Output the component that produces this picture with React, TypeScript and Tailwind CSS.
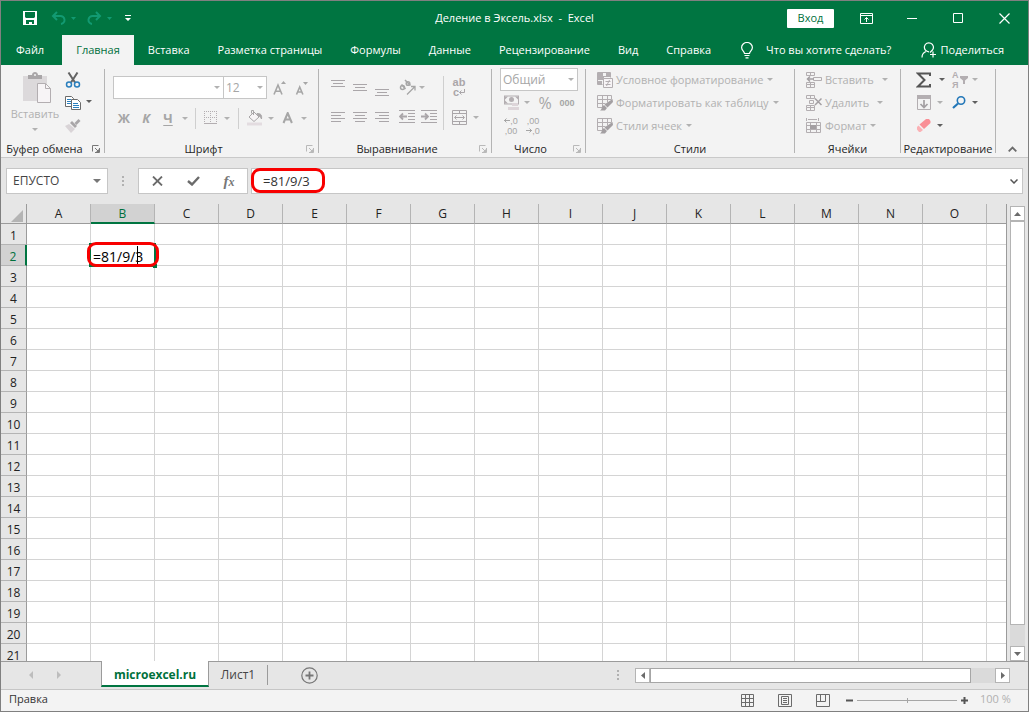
import { useState, type ReactNode } from "react";

const COLS = ["A", "B", "C", "D", "E", "F", "G", "H", "I", "J", "K", "L", "M", "N", "O", ""];
const ROWS = Array.from({ length: 21 }, (_, i) => i + 1);
const TABS = ["Файл", "Главная", "Вставка", "Разметка страницы", "Формулы", "Данные", "Рецензирование", "Вид", "Справка"];

const iconBtn = "flex flex-none items-center justify-center";
const DIM = "#b3aeb1";

// ── Small shared pieces ──────────────────────────────────────────────────────
function Caret({ dark = false }: { dark?: boolean }) {
  return (
    <svg width="6" height="3" viewBox="0 0 6 3" className="flex-none">
      <path d="M0 0h6L3 3z" fill={dark ? "#5f5f5f" : "#b1b1b1"} />
    </svg>
  );
}

function CaretBtn({ label, className, dark }: { label: string; className: string; dark?: boolean }) {
  return (
    <button aria-label={label} className={iconBtn + " h-5 " + className}>
      <Caret dark={dark} />
    </button>
  );
}

function IconBtn({ label, className, children }: { label: string; className: string; children: ReactNode }) {
  return (
    <button aria-label={label} title={label} className={iconBtn + " " + className}>
      {children}
    </button>
  );
}

function Combo({ label, value, className }: { label: string; value: string; className: string }) {
  return (
    <div className={"relative flex-none " + className}>
      <select
        aria-label={label}
        defaultValue={value}
        className="block h-[23px] w-full appearance-none border border-[#c6c6c6] bg-white pl-[2px] text-[12px] leading-5 text-[#a6a6a6] outline-none"
      >
        <option value={value}>{value}</option>
      </select>
      <span className="pointer-events-none absolute right-1 top-[10px]"><Caret /></span>
    </div>
  );
}

function Group({ title, className, launcher, launcherDark, children }: {
  title: string; className: string; launcher?: boolean; launcherDark?: boolean; children: ReactNode;
}) {
  return (
    <section className={"flex flex-none " + className}>
      <div className="flex min-w-0 flex-1 flex-col">
        <div className="min-h-0 flex-1">{children}</div>
        <div className="flex h-4 items-center">
          <h2 className="flex-1 whitespace-nowrap text-center text-[11px] leading-4 text-[#262626]">{title}</h2>
          {launcher && (
            <IconBtn label={"Параметры: " + title} className="h-4 w-4">
              <svg width="8" height="8" viewBox="0 0 8 8" fill="none" stroke={launcherDark ? "#777" : "#b9b9b9"}>
                <path d="M.5 6.500v-6h6M3 3l3 3M7.500 3v4.500H3" />
                <path d="M7 4v3H4z" fill={launcherDark ? "#777" : "#b9b9b9"} stroke="none" />
              </svg>
            </IconBtn>
          )}
        </div>
      </div>
      <div className="my-1 w-px bg-[#b4b4b4]" />
    </section>
  );
}

function Lines({ d }: { d: string }) {
  return (
    <svg width="16" height="16" viewBox="0 0 16 16" fill="none" stroke="#aaa6a9"><path d={d} /></svg>
  );
}

// ── Title bar and ribbon tabs ────────────────────────────────────────────────
function TitleBar() {
  return (
    <header className="relative flex h-[34px] flex-none items-center text-white">
      <IconBtn label="Сохранить" className="ml-[17px] h-6 w-6">
        <svg width="14" height="14" viewBox="0 0 14 14">
          <path d="M0 0h14v14H0z" fill="#fff" />
          <path d="M2 1h10v5l-1 1H3L2 6zM3 9h8v4H9v-2H6v2H3z" fill="#007541" />
        </svg>
      </IconBtn>
      <IconBtn label="Отменить" className="ml-1 h-6 w-6">
        <svg width="15" height="14" viewBox="0 0 15 14" fill="none" stroke="#129a72" strokeWidth="2">
          <path d="M1.500 5H9a4 4 0 0 1 1 8M6 1L2 5l4 4" />
        </svg>
      </IconBtn>
      <svg width="5" height="3" className="ml-[1px]"><path d="M0 0h5L2.500 3z" fill="#129a72" /></svg>
      <IconBtn label="Вернуть" className="ml-[6px] h-6 w-6">
        <svg width="15" height="14" viewBox="0 0 15 14" fill="none" stroke="#129a72" strokeWidth="2">
          <path d="M13.500 5H6a4 4 0 0 0-1 8M9 1l4 4-4 4" />
        </svg>
      </IconBtn>
      <svg width="5" height="3" className="ml-[1px]"><path d="M0 0h5L2.500 3z" fill="#129a72" /></svg>
      <IconBtn label="Настройка панели быстрого доступа" className="ml-1 h-6 w-6">
        <svg width="6" height="6" viewBox="0 0 6 6"><path d="M0 0h6v1H0zM0 3h6L3 6z" fill="#fff" /></svg>
      </IconBtn>
      <h1 className="absolute left-1/2 -translate-x-1/2 whitespace-pre text-[11px] leading-4">Деление в Эксель.xlsx  -  Excel</h1>
      <button className="ml-auto h-[19px] w-[47px] rounded-[1px] bg-white text-[11px] leading-4 text-[#00703c]">Вход</button>
      <div className="ml-[9px] flex">
        <IconBtn label="Параметры отображения ленты" className="h-7 w-[46px]">
          <svg width="13" height="11" viewBox="0 0 13 11" fill="none" stroke="#fff">
            <path d="M.5.5h12v10H.5zM.5 2.500h12M6.500 9V4.500M4.500 6.500l2-2 2 2" />
          </svg>
        </IconBtn>
        <IconBtn label="Свернуть" className="h-7 w-[46px]">
          <svg width="10" height="11" stroke="#fff"><path d="M0 5.500h10" /></svg>
        </IconBtn>
        <IconBtn label="Развернуть" className="h-7 w-[46px]">
          <svg width="10" height="10" fill="none" stroke="#fff"><path d="M.5.5h9v9h-9z" /></svg>
        </IconBtn>
        <IconBtn label="Закрыть" className="h-7 w-[47px]">
          <svg width="11" height="11" stroke="#fff"><path d="M.5.5l10 10M10.500.5l-10 10" strokeWidth="1.200" /></svg>
        </IconBtn>
      </div>
    </header>
  );
}

function RibbonTabs() {
  const [active, setActive] = useState("Главная");
  return (
    <nav className="flex h-[30px] flex-none items-stretch whitespace-nowrap pl-[1px] text-[11px] leading-4 text-white">
      {TABS.map((t) => (
        <button
          key={t}
          onClick={() => setActive(t)}
          className={"px-[14px] " + (t === "Файл" ? "mr-1 " : "") + (active === t ? "bg-[#f3f3f3] text-[#00703c]" : "")}
        >
          {t}
        </button>
      ))}
      <button className="ml-4 flex items-center gap-[13px]">
        <svg width="12" height="17" viewBox="0 0 12 17" fill="none" stroke="#fff" strokeWidth="1.200">
          <path d="M3.500 11.500c0-2-2.900-3-2.900-6a5.400 5 0 0 1 10.800 0c0 3-2.900 4-2.900 6zM3.500 13.500h5M4.500 15.800h3" />
        </svg>
        Что вы хотите сделать?
      </button>
      <button className="ml-auto mr-6 flex items-center gap-1">
        <svg width="16" height="16" viewBox="0 0 16 16" fill="none" stroke="#fff" strokeWidth="1.200">
          <path d="M1 15.500c0-3 1.500-5 4-6M8 9.800A4.500 4.500 0 1 1 11.500 8L9 10.500M12 9.500v6M9 12.500h6" />
        </svg>
        Поделиться
      </button>
    </nav>
  );
}

// ── Ribbon groups ────────────────────────────────────────────────────────────
function ClipboardGroup() {
  return (
    <Group title="Буфер обмена" className="w-[104px]" launcher launcherDark>
      <div className="flex pt-[3px]">
        <button className="ml-2 flex w-[52px] flex-col items-center pt-1 text-[11px] leading-4 text-[#b1b1b1]">
          <svg width="28" height="31" viewBox="0 0 28 31" className="ml-1">
            <path d="M0 4h24v25H0z" fill="#dcd9db" />
            <path d="M5 7V3h4c0-4 6-4 6 0h4v4z" fill="#a9a6a8" />
            <circle cx="12" cy="3" r="1" fill="#f3f3f3" />
            <path d="M14.500 11.500h8l5 5v14h-13z" fill="#f7f4f6" stroke="#b3aeb1" />
            <path d="M22.500 11.500v5h5" fill="none" stroke="#b3aeb1" />
          </svg>
          <span className="mt-[3px]">Вставить</span>
          <span className="mt-[6px]"><Caret /></span>
        </button>
        <div className="ml-[2px] flex flex-col">
          <IconBtn label="Вырезать" className="h-[23px] w-5">
            <svg width="16" height="16" viewBox="0 0 16 16" fill="none">
              <path d="M3.500.5l6.500 10M12.500.5L6 10.500" stroke="#636363" strokeWidth="2" />
              <circle cx="4" cy="12.500" r="2.500" stroke="#2a7fbd" strokeWidth="1.500" />
              <circle cx="12" cy="12.500" r="2.500" stroke="#2a7fbd" strokeWidth="1.500" />
            </svg>
          </IconBtn>
          <div className="flex">
            <IconBtn label="Копировать" className="h-[23px] w-5">
              <svg width="16" height="14" viewBox="0 0 16 14" fill="none">
                <path d="M.5.5h6l2 2v8h-8z" fill="#fff" stroke="#6b6b6b" />
                <path d="M2 3.500h4M2 5.500h4M2 7.500h4" stroke="#2a7fbd" />
                <path d="M6.500 3.500h6l3 3v7h-9z" fill="#fff" stroke="#6b6b6b" />
                <path d="M8 7.500h5M8 9.500h6M8 11.500h6" stroke="#2a7fbd" />
              </svg>
            </IconBtn>
            <CaretBtn label="Варианты копирования" className="w-3" dark />
          </div>
          <IconBtn label="Формат по образцу" className="h-[23px] w-5">
            <svg width="16" height="15" viewBox="0 0 16 15">
              <path d="M0 8l4-2 6 5-4 4z" fill="#d9d4d7" />
              <path d="M5 5l2-2 5 5-2 2z" fill="#a9a6a8" />
              <path d="M9.500 5l4-4 2 2-4 4z" fill="#a9a6a8" />
            </svg>
          </IconBtn>
        </div>
      </div>
    </Group>
  );
}

function VSep({ className }: { className: string }) {
  return <div className={"w-px flex-none bg-[#cfcfcf] " + className} />;
}

function FontGroup() {
  const letter = " h-[22px] w-[22px] text-[13px] font-bold leading-4 text-[#a6a6a6]";
  return (
    <Group title="Шрифт" className="w-[214px]" launcher>
      <div className="flex pl-2 pt-[11px]">
        <Combo label="Шрифт" value="" className="w-[111px]" />
        <Combo label="Размер шрифта" value="12" className="-ml-px w-[44px]" />
        <IconBtn label="Увеличить размер шрифта" className="ml-1 h-[23px] w-[18px]">
          <svg width="14" height="14" viewBox="0 0 14 14" fill="none" stroke="#a6a6a6" strokeWidth="1.600">
            <path d="M1 13.500L5 4l4 9.500M2.500 10.200h5" />
            <path d="M8 3h5l-2.500-3z" fill="#a6a6a6" stroke="none" />
          </svg>
        </IconBtn>
        <IconBtn label="Уменьшить размер шрифта" className="ml-1 h-[23px] w-[18px]">
          <svg width="14" height="14" viewBox="0 0 14 14" fill="none" stroke="#a6a6a6" strokeWidth="1.600">
            <path d="M1.500 13.500L4.700 6l3.200 7.500M2.800 11h4" />
            <path d="M8 1h5l-2.500 3z" fill="#a6a6a6" stroke="none" />
          </svg>
        </IconBtn>
      </div>
      <div className="flex items-center pl-2 pt-2">
        <button className={iconBtn + letter}>Ж</button>
        <button className={iconBtn + letter + " italic"}>К</button>
        <button className={iconBtn + letter + " underline underline-offset-2"}>Ч</button>
        <CaretBtn label="Варианты подчеркивания" className="w-3" />
        <VSep className="ml-1 h-[21px]" />
        <IconBtn label="Границы" className="ml-[6px] h-[22px] w-[18px]">
          <svg width="14" height="14" viewBox="0 0 14 14" fill="none" stroke={DIM}>
            <path d="M0 .5h13M0 6.500h13M.5 0v13M6.500 0v13M12.500 0v13" strokeDasharray="1 1" />
            <path d="M0 12.500h13" />
          </svg>
        </IconBtn>
        <CaretBtn label="Варианты границ" className="w-[14px]" />
        <VSep className="ml-1 h-[21px]" />
        <IconBtn label="Цвет заливки" className="ml-[6px] h-[22px] w-[20px]">
          <svg width="16" height="16" viewBox="0 0 16 16" fill="none" stroke="#a9a6a8">
            <path d="M2 7l5-5 5 5-5 4.500z" fill="#f7f4f6" />
            <path d="M6.500 5V.5h-2v3" />
            <path d="M10 3.500c4 0 5 1.500 4.500 5.500-1-2-1.500-3-2.500-2.500z" fill="#a9a6a8" />
            <path d="M0 12.500h15v3H0z" fill="#e3dce0" stroke="none" />
          </svg>
        </IconBtn>
        <CaretBtn label="Варианты заливки" className="w-[12px]" />
        <IconBtn label="Цвет текста" className="h-[22px] w-[22px]">
          <svg width="12" height="12" viewBox="0 0 12 12" fill="none" stroke="#a6a6a6" strokeWidth="2">
            <path d="M1.500 11L5.700 1l4.200 10M3 7.500h5.500" />
          </svg>
        </IconBtn>
        <CaretBtn label="Варианты цвета текста" className="w-[10px]" />
      </div>
    </Group>
  );
}

function AlignGroup() {
  const b = "h-[30px] w-[22px]";
  return (
    <Group title="Выравнивание" className="w-[173px]" launcher>
      <div className="flex pl-2">
        <div className="w-[116px] pt-[7px]">
          <div className="flex">
            <IconBtn label="По верхнему краю" className={b}><Lines d="M1 1.500h14M3 4.500h10M1 7.500h14" /></IconBtn>
            <IconBtn label="По середине" className={b}><Lines d="M1 5.500h14M3 8.500h10M1 11.500h14" /></IconBtn>
            <IconBtn label="По нижнему краю" className={b}>
              <svg width="16" height="22" viewBox="0 0 16 22" fill="none" stroke="#aaa6a9"><path d="M1 13.500h14M3 16.500h10M1 19.500h14" /></svg>
            </IconBtn>
            <IconBtn label="Ориентация" className={b + " ml-[3px]"}>
              <svg width="17" height="17" viewBox="0 0 17 17" fill="none" stroke="#a6a6a6">
                <circle cx="3.500" cy="8.500" r="2" strokeWidth="1.500" />
                <path d="M2.500 5.500l4 4.500M6 1l5.500 5.500" strokeWidth="1.500" />
                <circle cx="9" cy="4.500" r="1.800" strokeWidth="1.500" />
                <path d="M8 15.500l7.500-7.500M12 7.500h4v4" strokeWidth="1.300" />
              </svg>
            </IconBtn>
            <CaretBtn label="Варианты ориентации" className="mt-[5px] w-2" />
          </div>
          <div className="flex">
            <IconBtn label="По левому краю" className={b}><Lines d="M1 3.500h14M1 6.500h10M1 9.500h14M1 12.500h10" /></IconBtn>
            <IconBtn label="По центру" className={b}><Lines d="M1 3.500h14M3 6.500h10M1 9.500h14M3 12.500h10" /></IconBtn>
            <IconBtn label="По правому краю" className={b}><Lines d="M1 3.500h14M5 6.500h10M1 9.500h14M5 12.500h10" /></IconBtn>
            <IconBtn label="Уменьшить отступ" className={b + " ml-[3px]"}>
              <svg width="16" height="14" viewBox="0 0 16 14" fill="none" stroke="#aaa6a9">
                <path d="M0 .5h16M9 3.500h7M9 6.500h7M9 9.500h7M0 12.500h16" />
                <path d="M1 6.500h7M4 3.500l-3 3 3 3" strokeWidth="1.800" />
              </svg>
            </IconBtn>
            <IconBtn label="Увеличить отступ" className={b}>
              <svg width="16" height="14" viewBox="0 0 16 14" fill="none" stroke="#aaa6a9">
                <path d="M0 .5h16M9 3.500h7M9 6.500h7M9 9.500h7M0 12.500h16" />
                <path d="M0 6.500h7M4 3.500l3 3-3 3" strokeWidth="1.800" />
              </svg>
            </IconBtn>
          </div>
        </div>
        <VSep className="mt-[11px] h-[54px]" />
        <div className="pl-1 pt-[7px]">
          <button aria-label="Перенести текст" className="flex h-[30px] w-[22px] flex-col items-center justify-center font-['Liberation_Sans',sans-serif] text-[11px] font-bold leading-[10px] text-[#aaa6a9]">
            <span>ab</span>
            <span className="flex items-center">
              c
              <svg width="6" height="6" viewBox="0 0 6 6" fill="none" stroke="#aaa6a9"><path d="M5.500 0v3.500h-5M2.500 1.500l-2 2 2 2" /></svg>
            </span>
          </button>
          <div className="flex items-center">
            <IconBtn label="Объединить" className={b}>
              <svg width="15" height="15" viewBox="0 0 15 15" fill="none" stroke="#aaa6a9">
                <path d="M.5.5h14v14H.5zM.5 3.500h14M.5 11.500h14M7.500 0v3.500M7.500 11.500V15M3 7.500h9M4.500 5.500l-2 2 2 2M10.500 5.500l2 2-2 2" />
              </svg>
            </IconBtn>
            <CaretBtn label="Варианты объединения" className="w-3" />
          </div>
        </div>
      </div>
    </Group>
  );
}

function NumberGroup() {
  return (
    <Group title="Число" className="w-[94px]" launcher>
      <div className="pl-2 pt-[3px]">
        <Combo label="Числовой формат" value="Общий" className="w-[78px]" />
        <div className="flex h-[23px] items-center text-[#a6a6a6]">
          <IconBtn label="Финансовый формат" className="h-[22px] w-[22px]">
            <svg width="17" height="16" viewBox="0 0 17 16">
              <path d="M1 .5h15v9H1z" fill="#b3aeb1" />
              <path d="M2 1.500h13v7H2z" fill="#f3f3f3" />
              <path d="M2 1.500h3L2 4.500zM15 1.500v3l-3-3zM2 8.500v-3l3 3z" fill="#b3aeb1" />
              <circle cx="8.500" cy="4.500" r="2.500" fill="#b3aeb1" />
              <path d="M9 8h6v3H9zM5 12h6v3H5zM11 12h5v3h-5z" fill="#ddd5d9" />
            </svg>
          </IconBtn>
          <CaretBtn label="Варианты финансового формата" className="w-[10px]" />
          <button className="w-[26px] text-[16px] leading-5">%</button>
          <button className="w-[18px] font-['Liberation_Sans',sans-serif] text-[9px] font-bold leading-4">000</button>
        </div>
        <div className="flex h-[23px] items-center font-['Liberation_Sans',sans-serif] text-[9px] leading-[10px] text-[#a6a6a6]">
          <button aria-label="Увеличить разрядность" className="w-[22px]">
            <span className="flex items-center justify-center">
              <svg width="6" height="5" viewBox="0 0 6 5" fill="none" stroke="#a6a6a6"><path d="M0 2.500h6M2.500.5l-2 2 2 2" /></svg>,0
            </span>
            <span className="block text-center">,00</span>
          </button>
          <button aria-label="Уменьшить разрядность" className="w-[22px]">
            <span className="block text-center">,00</span>
            <span className="flex items-center justify-center">
              <svg width="6" height="5" viewBox="0 0 6 5" fill="none" stroke="#a6a6a6"><path d="M0 2.500h6M3.500.5l2 2-2 2" /></svg>,0
            </span>
          </button>
        </div>
      </div>
    </Group>
  );
}

function MenuRow({ label, gap = "gap-1", icon }: { label: string; gap?: string; icon: ReactNode }) {
  return (
    <button className={"flex h-[23px] items-center whitespace-nowrap text-[11px] leading-4 text-[#b1b1b1] " + gap}>
      <span className="flex items-center gap-[3px]">{icon}{label}</span>
      <Caret />
    </button>
  );
}

function TableBrush() {
  return (
    <svg width="16" height="16" viewBox="0 0 16 16" fill="none" stroke={DIM}>
      <path d="M.5.5h14v4M.5.5v12h5M.5 4.500h14M.5 8.500h8M5.500.5v12M10.500.5v7" />
      <path d="M15.500 4L16 7l-5.500 5.500-3-3zM7 10l3 3-2 2.500H3c2-1 1.500-4 4-5.500z" fill="#a39fa2" stroke="none" />
    </svg>
  );
}

function StylesGroup() {
  return (
    <Group title="Стили" className="w-[209px]">
      <div className="flex flex-col items-start pl-[11px] pt-[3px]">
        <MenuRow
          label="Условное форматирование"
          icon={
            <svg width="16" height="16" viewBox="0 0 16 16" fill="none" stroke={DIM}>
              <path d="M.5.5h13v5M.5.5v12h5M.5 4.500h13M5.500.5v4M9.500.5v4" />
              <path d="M1 1h4v3H1zM1 5h6v3H1zM1 9h4v3H1zM10 1h3v3h-3z" fill={DIM} stroke="none" />
              <path d="M6.500 6.500h9v9h-9z" fill="#f7f4f6" />
              <path d="M8.500 9.500h5M8.500 12.500h5M12.500 8l-3 6" />
            </svg>
          }
        />
        <MenuRow label="Форматировать как таблицу" icon={<TableBrush />} />
        <MenuRow label="Стили ячеек" icon={<TableBrush />} />
      </div>
    </Group>
  );
}

function CellsGroup() {
  return (
    <Group title="Ячейки" className="w-[106px]">
      <div className="flex flex-col items-start pl-[11px] pt-[3px]">
        <MenuRow
          label="Вставить"
          gap="gap-2"
          icon={
            <svg width="16" height="16" viewBox="0 0 16 16" fill="none" stroke={DIM}>
              <path d="M.5 3.500v-3h8v3h-8M4.500.5v3M.5 12.500v-2h8v5h-8zM4.500 10.500v5M.5 12.500h8M7.500 5.500h8v3h-8z" />
              <path d="M8 7H1M4 4.500L1.500 7 4 9.500" stroke="#a39fa2" strokeWidth="1.500" />
            </svg>
          }
        />
        <MenuRow
          label="Удалить"
          gap="gap-2"
          icon={
            <svg width="16" height="16" viewBox="0 0 16 16" fill="none" stroke={DIM}>
              <path d="M.5 3.500v-3h8v3h-8M4.500.5v3M.5 12.500v-2h8v5h-8zM4.500 10.500v5M.5 12.500h8M3.500 5.500h4v3h-4z" />
              <path d="M9 3.500l6.500 6.500M15.500 3.500L9 10" stroke="#a39fa2" strokeWidth="1.500" />
            </svg>
          }
        />
        <MenuRow
          label="Формат"
          icon={
            <svg width="16" height="16" viewBox="0 0 16 16" fill="none" stroke={DIM}>
              <path d="M.5 0v3M12.500 0v3M2 1.500h9M.5 4.500h14v10H.5zM.5 7.500h14M.5 11.500h14M4.500 4.500v10M10.500 4.500v10" />
              <path d="M4 7h6v4H4z" fill="#a39fa2" stroke="none" />
            </svg>
          }
        />
      </div>
    </Group>
  );
}

function EditGroup() {
  return (
    <Group title="Редактирование" className="w-[95px]">
      <div className="flex pl-[13px] pt-[3px]">
        <div className="w-[35px]">
          <div className="flex h-[23px] items-center">
            <IconBtn label="Сумма" className="w-5">
              <svg width="16" height="16" viewBox="0 0 16 16" fill="none" stroke="#555" strokeWidth="2">
                <path d="M14 4V1.500H2L8.500 8 2 14.500h12V12" />
              </svg>
            </IconBtn>
            <CaretBtn label="Другие функции" className="ml-[2px] w-3" dark />
          </div>
          <div className="flex h-[23px] items-center">
            <IconBtn label="Заполнить" className="w-5">
              <svg width="14" height="15" viewBox="0 0 14 15" fill="none" stroke={DIM}>
                <path d="M.5.5h13v14H.5z" /><path d="M0 0h14v4H0z" fill={DIM} stroke="none" />
                <path d="M7 5v8M3.500 9L7 12.500 10.500 9" strokeWidth="1.700" stroke="#a39fa2" />
              </svg>
            </IconBtn>
            <CaretBtn label="Варианты заполнения" className="w-3" />
          </div>
          <div className="flex h-[23px] items-center">
            <IconBtn label="Очистить" className="w-5">
              <svg width="14" height="13" viewBox="0 0 14 13">
                <path d="M2.500 5.500L9 0h3l1.500 2v2L7 10z" fill="#f98f96" />
                <path d="M1.500 6.500L6 11l-2.500 2H2L0 10.500V8z" fill="#fbb1b5" />
              </svg>
            </IconBtn>
            <CaretBtn label="Варианты очистки" className="w-3" dark />
          </div>
        </div>
        <div>
          <div className="flex h-[23px] items-center">
            <button aria-label="Сортировка и фильтр" className="flex h-5 w-5 items-center gap-[1px]">
              <span className="flex flex-col pl-[3px] font-['Liberation_Sans',sans-serif] text-[9px] font-bold leading-[10px] text-[#b3aeb1]">
                <span>А</span><span>Я</span>
              </span>
              <svg width="8" height="8" viewBox="0 0 8 8" className="flex-none"><path d="M0 0h8v2L5 4.500V8H3V4.500L0 2z" fill={DIM} /></svg>
            </button>
            <CaretBtn label="Варианты сортировки" className="w-3" />
          </div>
          <div className="flex h-[23px] items-center">
            <IconBtn label="Найти и выделить" className="w-5">
              <svg width="14" height="13" viewBox="0 0 14 13" fill="none" stroke="#2377b8">
                <circle cx="9" cy="4.500" r="3.700" strokeWidth="1.600" />
                <path d="M6 7.500L1 12" strokeWidth="2.200" />
              </svg>
            </IconBtn>
            <CaretBtn label="Варианты поиска" className="w-3" dark />
          </div>
        </div>
      </div>
    </Group>
  );
}

function Ribbon() {
  return (
    <div className="flex h-[93px] flex-none border-b border-[#c9c9c9] bg-[#f3f3f3]">
      <ClipboardGroup />
      <FontGroup />
      <AlignGroup />
      <NumberGroup />
      <StylesGroup />
      <CellsGroup />
      <EditGroup />
      <div className="flex flex-1 items-end justify-center">
        <IconBtn label="Свернуть ленту" className="h-4 w-4">
          <svg width="9" height="6" viewBox="0 0 9 6" fill="none" stroke="#6b6b6b" strokeWidth="1.800"><path d="M.7 5.300L4.500 1.500l3.800 3.800" /></svg>
        </IconBtn>
      </div>
    </div>
  );
}

// ── Formula bar ──────────────────────────────────────────────────────────────
function Dots() {
  return (
    <svg width="2" height="10" viewBox="0 0 2 10" className="flex-none"><path d="M0 0h2v2H0zM0 4h2v2H0zM0 8h2v2H0z" fill="#b1b1b1" /></svg>
  );
}

function FormulaBar({ value, onChange }: { value: string; onChange: (v: string) => void }) {
  return (
    <div className="flex h-[46px] flex-none items-start bg-[#e6e6e6] px-[5px] pt-[10px]">
      <div className="flex h-[26px] w-[102px] flex-none items-center border border-[#c6c6c6] bg-white">
        <input aria-label="Имя" defaultValue="ЕПУСТО" className="w-full min-w-0 bg-transparent pl-[6px] text-[12px] leading-4 text-[#444] outline-none" />
        <button aria-label="Список имен" className={iconBtn + " h-5 w-5"}>
          <svg width="8" height="4"><path d="M0 0h8L4 4z" fill="#777" /></svg>
        </button>
      </div>
      <div className="flex h-[26px] w-[30px] flex-none items-center justify-center"><Dots /></div>
      <div className="flex h-[26px] w-[110px] flex-none items-center border border-[#c6c6c6] bg-white">
        <IconBtn label="Отмена" className="h-6 w-9">
          <svg width="11" height="10" fill="none" stroke="#6b6b6b" strokeWidth="1.800"><path d="M1 .5l9 9M10 .5l-9 9" /></svg>
        </IconBtn>
        <IconBtn label="Ввод" className="h-6 w-9">
          <svg width="13" height="10" fill="none" stroke="#6b6b6b" strokeWidth="2.400"><path d="M1 5l4 3.500L12 1" /></svg>
        </IconBtn>
        <button aria-label="Вставить функцию" className="h-6 w-9 font-['Liberation_Serif',serif] text-[15px] font-bold italic leading-5 text-[#777]">
          f<span className="text-[12px]">x</span>
        </button>
      </div>
      <div className="relative ml-[3px] flex h-[26px] flex-1 items-center border border-[#c6c6c6] bg-white">
        <input
          aria-label="Строка формул"
          value={value}
          onChange={(e) => onChange(e.target.value)}
          className="min-w-0 flex-1 bg-transparent pl-[11px] text-[13px] leading-5 text-[#333] outline-none"
        />
        <IconBtn label="Развернуть строку формул" className="h-6 w-4">
          <svg width="8" height="5" fill="none" stroke="#555" strokeWidth="1.500"><path d="M.5.5L4 4 7.500.5" /></svg>
        </IconBtn>
        <span className="pointer-events-none absolute -left-px -top-px h-[25px] w-[74px] rounded-[9px] border-3 border-[#f80000]" />
      </div>
    </div>
  );
}

// ── Sheet grid ───────────────────────────────────────────────────────────────
function Sheet({ value, onChange }: { value: string; onChange: (v: string) => void }) {
  return (
    <div className="min-w-0 flex-1 overflow-hidden border-r border-[#9b9b9b] bg-white">
      <table className="w-[1050px] table-fixed border-separate border-spacing-0">
        <thead>
          <tr className="h-5 bg-[#e6e6e6] text-[12px] leading-4 text-[#222]">
            <th scope="col" className="w-[26px] border-b border-r border-[#9b9b9b] p-0">
              <svg width="12" height="12" className="ml-auto mr-[3px] mt-1"><path d="M12 0v12H0z" fill="#b4b4b4" /></svg>
            </th>
            {COLS.map((c) => (
              <th
                key={c}
                scope="col"
                className={"h-5 w-16 border-r border-r-[#b4b4b4] p-0 font-normal " +
                  (c === "B" ? "border-b-2 border-b-[#007541] bg-[#d2d2d2] pt-px text-[#00703c]" : "border-b border-b-[#9b9b9b]")}
              >
                {c}
              </th>
            ))}
          </tr>
        </thead>
        <tbody>
          {ROWS.map((r) => (
            <tr key={r} className="h-[21px]">
              <th
                scope="row"
                className={"h-[21px] border-b border-b-[#b4b4b4] p-0 text-center align-bottom text-[12px] font-normal leading-4 " +
                  (r === 2 ? "border-r-2 border-r-[#007541] bg-[#d2d2d2] text-[#00703c]" : "border-r border-r-[#9b9b9b] bg-[#e6e6e6] text-[#222]")}
              >
                {r}
              </th>
              {COLS.map((c) => (
                <td key={c} className="h-[21px] border-b border-r border-[#d4d4d4] p-0">
                  {r === 2 && c === "B" && <ActiveCell value={value} onChange={onChange} />}
                </td>
              ))}
            </tr>
          ))}
        </tbody>
      </table>
    </div>
  );
}

function ActiveCell({ value, onChange }: { value: string; onChange: (v: string) => void }) {
  return (
    <div className="relative h-5 w-full">
      <span className="absolute -inset-[2px] border-2 border-[#007541]" />
      <span className="absolute -bottom-[3px] -right-[3px] h-1 w-1 bg-[#007541]" />
      <input
        aria-label="Ячейка B2"
        value={value}
        onChange={(e) => onChange(e.target.value)}
        className="relative block h-5 w-full bg-white pl-[2px] pt-[2px] text-[14px] leading-[18px] text-black outline-none"
      />
      <span className="absolute left-[46px] top-[1px] h-[18px] w-px bg-black" />
      <span className="pointer-events-none absolute -left-[4px] -top-[3px] h-[25px] w-[72px] rounded-[9px] border-3 border-[#f80000]" />
    </div>
  );
}

const scrollBtn = "flex h-[15px] w-[15px] flex-none items-center justify-center border border-[#b4b4b4] bg-white";

function VScroll() {
  return (
    <div className="flex w-[21px] flex-none flex-col items-center bg-[#e6e6e6] pt-[2px]">
      <button aria-label="Вверх" className={scrollBtn}>
        <svg width="7" height="4"><path d="M0 4h7L3.500 0z" fill="#6b6b6b" /></svg>
      </button>
      <div className="flex w-[15px] flex-1 flex-col bg-[#dadada]">
        <div className="h-[95%] border border-[#b4b4b4] bg-white" />
      </div>
      <button aria-label="Вниз" className={scrollBtn}>
        <svg width="7" height="4"><path d="M0 0h7L3.500 4z" fill="#6b6b6b" /></svg>
      </button>
    </div>
  );
}

// ── Sheet tabs and status bar ────────────────────────────────────────────────
function SheetTabs() {
  return (
    <div className="flex h-[28px] flex-none items-start border-t border-[#9b9b9b] bg-[#e6e6e6] text-[12px] leading-4">
      <div className="flex h-[25px] w-[100px] flex-none items-center pl-4">
        <IconBtn label="Предыдущий лист" className="h-5 w-7"><svg width="4" height="8"><path d="M4 0v8L0 4z" fill="#bdbdbd" /></svg></IconBtn>
        <IconBtn label="Следующий лист" className="h-5 w-7"><svg width="4" height="8"><path d="M0 0v8l4-4z" fill="#bdbdbd" /></svg></IconBtn>
      </div>
      <button className="-mt-px h-[26px] w-[108px] flex-none border-x border-b-2 border-x-[#9b9b9b] border-b-[#007541] bg-white pt-1 text-[12px] font-bold text-[#00703c]">
        microexcel.ru
      </button>
      <button className="h-[25px] w-[58px] flex-none text-[#444]">Лист1</button>
      <div className="mt-[3px] h-5 w-px flex-none bg-[#9b9b9b]" />
      <IconBtn label="Новый лист" className="ml-[29px] h-[26px] w-6">
        <svg width="17" height="17" viewBox="0 0 17 17" fill="none" stroke="#777">
          <circle cx="8.500" cy="8.500" r="7.700" strokeWidth="1.200" /><path d="M8.500 4.500v8M4.500 8.500h8" strokeWidth="1.800" />
        </svg>
      </IconBtn>
      <div className="ml-auto flex h-[26px] items-center"><Dots /></div>
      <div className="ml-4 mr-[18px] mt-[6px] flex h-[15px] w-[375px] flex-none">
        <button aria-label="Влево" className={scrollBtn}><svg width="4" height="7"><path d="M4 0v7L0 3.500z" fill="#6b6b6b" /></svg></button>
        <div className="flex flex-1 bg-[#dadada]"><div className="w-[93%] border border-[#a6a6a6] bg-white" /></div>
        <button aria-label="Вправо" className={scrollBtn}><svg width="4" height="7"><path d="M0 0v7l4-3.500z" fill="#6b6b6b" /></svg></button>
      </div>
    </div>
  );
}

function StatusBar() {
  return (
    <footer className="flex h-[22px] flex-none items-center border-t border-[#c6c6c6] bg-[#f3f3f3] pl-2 pr-[18px] text-[11px] leading-4 text-[#333]">
      <span className="-mt-1">Правка</span>
      <div className="ml-auto flex items-center gap-6">
        <IconBtn label="Обычный" className="w-[14px]">
          <svg width="13" height="13" fill="none" stroke="#6b6b6b"><path d="M.5.5h12v12H.5zM.5 4.500h12M.5 8.500h12M4.500.5v12M8.500.5v12" /></svg>
        </IconBtn>
        <IconBtn label="Разметка страницы" className="w-[14px]">
          <svg width="14" height="13" fill="none" stroke="#6b6b6b"><path d="M.5.5h13v12H.5zM3.500 2.500h7v8h-7zM5 4.500h4M5 6.500h4M5 8.500h4" /></svg>
        </IconBtn>
        <IconBtn label="Страничный режим" className="w-[14px]">
          <svg width="14" height="13" fill="none" stroke="#6b6b6b"><path d="M.5.5h13v12H.5zM4.500.5v7M9.500.5v7h-9" /></svg>
        </IconBtn>
      </div>
      <IconBtn label="Уменьшить" className="ml-4 w-[7px]"><svg width="7" height="7"><path d="M0 2.500h7v2H0z" fill="#555" /></svg></IconBtn>
      <input
        aria-label="Масштаб"
        type="range"
        defaultValue={50}
        className="ml-1 h-px w-[100px] appearance-none bg-[#a6a6a6] [&::-webkit-slider-thumb]:h-[5px] [&::-webkit-slider-thumb]:w-px [&::-webkit-slider-thumb]:appearance-none [&::-webkit-slider-thumb]:bg-[#a6a6a6]"
      />
      <IconBtn label="Увеличить" className="ml-1 w-[7px]"><svg width="7" height="7"><path d="M0 2.500h7v2H0zM2.500 0h2v7h-2z" fill="#555" /></svg></IconBtn>
      <span className="-mt-1 ml-3 w-[30px] whitespace-nowrap text-right text-[#b1b1b1]">100 %</span>
    </footer>
  );
}

export default function App() {
  const [formula, setFormula] = useState("=81/9/3");
  return (
    <div className="flex h-screen flex-col overflow-hidden border border-[#808080] bg-[#007541] font-['Open_Sans',sans-serif]">
      <TitleBar />
      <RibbonTabs />
      <Ribbon />
      <FormulaBar value={formula} onChange={setFormula} />
      <main className="flex min-h-0 flex-1">
        <Sheet value={formula} onChange={setFormula} />
        <VScroll />
      </main>
      <SheetTabs />
      <StatusBar />
    </div>
  );
}
